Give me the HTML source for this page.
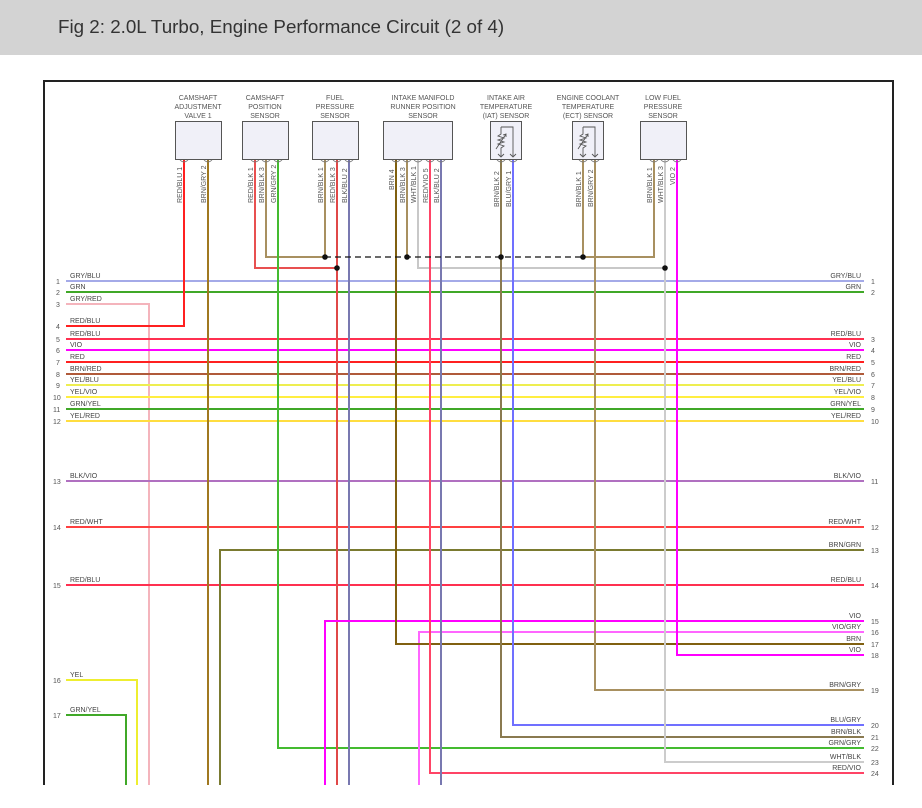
<!DOCTYPE html>
<html><head><meta charset="utf-8"><style>
html,body{margin:0;padding:0;background:#fff;}
body{width:922px;height:808px;overflow:hidden;position:relative;font-family:"Liberation Sans",sans-serif;}
.hdr{position:absolute;left:0;top:0;width:922px;height:55px;background:#d3d3d3;}
.hdr span{position:absolute;left:58px;top:16px;font-size:18.8px;color:#333;}
svg{position:absolute;left:0;top:0;}
svg text{font-family:"Liberation Sans",sans-serif;fill:#444;}
.t{font-size:7px;text-anchor:middle;fill:#555;}
.p{font-size:7px;fill:#555;}
.l{font-size:7px;fill:#444;}
.r{font-size:7px;fill:#444;text-anchor:end;}
.n{font-size:7px;fill:#555;}
</style></head><body>
<div class="hdr"><span>Fig 2: 2.0L Turbo, Engine Performance Circuit (2 of 4)</span></div>
<svg width="922" height="808" viewBox="0 0 922 808">
<path d="M44,785 V81 H893 V785" fill="none" stroke="#222" stroke-width="2"/>
<g class="t">
<text x="198" y="100" class="t">CAMSHAFT</text><text x="198" y="109" class="t">ADJUSTMENT</text><text x="198" y="118" class="t">VALVE 1</text>
<text x="265" y="100" class="t">CAMSHAFT</text><text x="265" y="109" class="t">POSITION</text><text x="265" y="118" class="t">SENSOR</text>
<text x="335" y="100" class="t">FUEL</text><text x="335" y="109" class="t">PRESSURE</text><text x="335" y="118" class="t">SENSOR</text>
<text x="423" y="100" class="t">INTAKE MANIFOLD</text><text x="423" y="109" class="t">RUNNER POSITION</text><text x="423" y="118" class="t">SENSOR</text>
<text x="506" y="100" class="t">INTAKE AIR</text><text x="506" y="109" class="t">TEMPERATURE</text><text x="506" y="118" class="t">(IAT) SENSOR</text>
<text x="588" y="100" class="t">ENGINE COOLANT</text><text x="588" y="109" class="t">TEMPERATURE</text><text x="588" y="118" class="t">(ECT) SENSOR</text>
<text x="663" y="100" class="t">LOW FUEL</text><text x="663" y="109" class="t">PRESSURE</text><text x="663" y="118" class="t">SENSOR</text>
</g>
<g fill="#f0f0f8" stroke="#555" stroke-width="1">
<rect x="175.5" y="121.5" width="46" height="38"/>
<rect x="242.5" y="121.5" width="46" height="38"/>
<rect x="312.5" y="121.5" width="46" height="38"/>
<rect x="383.5" y="121.5" width="69" height="38"/>
<rect x="490.5" y="121.5" width="31" height="38"/>
<rect x="572.5" y="121.5" width="31" height="38"/>
<rect x="640.5" y="121.5" width="46" height="38"/>
</g>
<g fill="none" stroke="#555" stroke-width="0.9">
<path d="M501,127 H513 V157 M501,127 V134 l-3,2 l6,2 l-6,2 l6,2 l-6,2 l6,2 l-3,2 V157 M498,154 L501,157 L504,154 M510,154 L513,157 L516,154 M496,149 L506,134 M503,135 L506,134 L506,137"/>
<path d="M583,127 H595 V157 M583,127 V134 l-3,2 l6,2 l-6,2 l6,2 l-6,2 l6,2 l-3,2 V157 M580,154 L583,157 L586,154 M592,154 L595,157 L598,154 M578,149 L588,134 M585,135 L588,134 L588,137"/>
</g>
<g stroke-width="2" fill="none">
<path d="M66,281 H864" stroke="#a4aae8"/>
<path d="M66,292 H864" stroke="#40a828"/>
<path d="M66,304 H149 V785" stroke="#f4b4bc"/>
<path d="M66,326 H184 V160" stroke="#ff2020"/>
<path d="M66,339 H864" stroke="#ff3050"/>
<path d="M66,350 H864" stroke="#ff00ff"/>
<path d="M66,362 H864" stroke="#ff2020"/>
<path d="M66,374 H864" stroke="#b05a3a"/>
<path d="M66,385 H864" stroke="#eeee50"/>
<path d="M66,397 H864" stroke="#ffee40"/>
<path d="M66,409 H864" stroke="#40a828"/>
<path d="M66,421 H864" stroke="#ffdd40"/>
<path d="M66,481 H864" stroke="#b070c0"/>
<path d="M66,527 H864" stroke="#ff4040"/>
<path d="M66,585 H864" stroke="#ff3050"/>
<path d="M66,680 H137 V785" stroke="#eeee30"/>
<path d="M66,715 H126 V785" stroke="#40a828"/>
<path d="M220,785 V550 H864" stroke="#7a7a30"/>
<path d="M208,160 V785" stroke="#a07820"/>
<path d="M255,160 V268 H337" stroke="#e85050"/>
<path d="M266,160 V257 H325 V160" stroke="#a89060"/>
<path d="M278,160 V748 H864" stroke="#44bb30"/>
<path d="M337,160 V785" stroke="#e04848"/>
<path d="M349,160 V785" stroke="#7878b0"/>
<path d="M325,785 V621 H864" stroke="#ff00ff"/>
<path d="M419,785 V632 H864" stroke="#ff66ff"/>
<path d="M396,160 V644 H864" stroke="#806010"/>
<path d="M407,160 V257" stroke="#a89060"/>
<path d="M418,160 V268 H665" stroke="#c8c8c8"/>
<path d="M430,160 V773 H864" stroke="#ff4466"/>
<path d="M441,160 V785" stroke="#7878b0"/>
<path d="M501,160 V737 H864" stroke="#8a7a50"/>
<path d="M513,160 V725 H864" stroke="#7070ff"/>
<path d="M583,160 V257 H654 V160" stroke="#a89060"/>
<path d="M595,160 V690 H864" stroke="#a89060"/>
<path d="M665,160 V762 H864" stroke="#cccccc"/>
<path d="M677,160 V655 H864" stroke="#ff00ff"/>
</g>
<path d="M325,257 H583" stroke="#111" stroke-width="1.3" stroke-dasharray="6,4" fill="none"/>
<g fill="#111">
<circle cx="325" cy="257" r="2.8"/><circle cx="407" cy="257" r="2.8"/><circle cx="501" cy="257" r="2.8"/><circle cx="583" cy="257" r="2.8"/>
<circle cx="337" cy="268" r="2.8"/><circle cx="665" cy="268" r="2.8"/>
</g>
<g fill="none" stroke="#777" stroke-width="0.8">
<path d="M180,160 q4,4 8,0 M204,160 q4,4 8,0 M251,160 q4,4 8,0 M262,160 q4,4 8,0 M274,160 q4,4 8,0 M321,160 q4,4 8,0 M333,160 q4,4 8,0 M345,160 q4,4 8,0 M392,160 q4,4 8,0 M403,160 q4,4 8,0 M414,160 q4,4 8,0 M426,160 q4,4 8,0 M437,160 q4,4 8,0 M497,160 q4,4 8,0 M509,160 q4,4 8,0 M579,160 q4,4 8,0 M591,160 q4,4 8,0 M650,160 q4,4 8,0 M661,160 q4,4 8,0 M673,160 q4,4 8,0"/>
</g>
<g class="p">
<text transform="translate(182,203) rotate(-90)" class="p">RED/BLU  1</text>
<text transform="translate(206,203) rotate(-90)" class="p">BRN/GRY  2</text>
<text transform="translate(253,203) rotate(-90)" class="p">RED/BLK  1</text>
<text transform="translate(264,203) rotate(-90)" class="p">BRN/BLK  3</text>
<text transform="translate(276,203) rotate(-90)" class="p">GRN/GRY  2</text>
<text transform="translate(323,203) rotate(-90)" class="p">BRN/BLK  1</text>
<text transform="translate(335,203) rotate(-90)" class="p">RED/BLK  3</text>
<text transform="translate(347,203) rotate(-90)" class="p">BLK/BLU  2</text>
<text transform="translate(394,190) rotate(-90)" class="p">BRN  4</text>
<text transform="translate(405,203) rotate(-90)" class="p">BRN/BLK  3</text>
<text transform="translate(416,203) rotate(-90)" class="p">WHT/BLK  1</text>
<text transform="translate(428,203) rotate(-90)" class="p">RED/VIO  5</text>
<text transform="translate(439,203) rotate(-90)" class="p">BLK/BLU  2</text>
<text transform="translate(499,207) rotate(-90)" class="p">BRN/BLK  2</text>
<text transform="translate(511,207) rotate(-90)" class="p">BLU/GRY  1</text>
<text transform="translate(581,207) rotate(-90)" class="p">BRN/BLK  1</text>
<text transform="translate(593,207) rotate(-90)" class="p">BRN/GRY  2</text>
<text transform="translate(652,203) rotate(-90)" class="p">BRN/BLK  1</text>
<text transform="translate(663,203) rotate(-90)" class="p">WHT/BLK  3</text>
<text transform="translate(675,185) rotate(-90)" class="p">VIO  2</text>
</g>
<g>
<text x="70" y="278" class="l">GRY/BLU</text><text x="56" y="284" class="n">1</text>
<text x="70" y="289" class="l">GRN</text><text x="56" y="295" class="n">2</text>
<text x="70" y="301" class="l">GRY/RED</text><text x="56" y="307" class="n">3</text>
<text x="70" y="323" class="l">RED/BLU</text><text x="56" y="329" class="n">4</text>
<text x="70" y="336" class="l">RED/BLU</text><text x="56" y="342" class="n">5</text>
<text x="70" y="347" class="l">VIO</text><text x="56" y="353" class="n">6</text>
<text x="70" y="359" class="l">RED</text><text x="56" y="365" class="n">7</text>
<text x="70" y="371" class="l">BRN/RED</text><text x="56" y="377" class="n">8</text>
<text x="70" y="382" class="l">YEL/BLU</text><text x="56" y="388" class="n">9</text>
<text x="70" y="394" class="l">YEL/VIO</text><text x="53" y="400" class="n">10</text>
<text x="70" y="406" class="l">GRN/YEL</text><text x="53" y="412" class="n">11</text>
<text x="70" y="418" class="l">YEL/RED</text><text x="53" y="424" class="n">12</text>
<text x="70" y="478" class="l">BLK/VIO</text><text x="53" y="484" class="n">13</text>
<text x="70" y="524" class="l">RED/WHT</text><text x="53" y="530" class="n">14</text>
<text x="70" y="582" class="l">RED/BLU</text><text x="53" y="588" class="n">15</text>
<text x="70" y="677" class="l">YEL</text><text x="53" y="683" class="n">16</text>
<text x="70" y="712" class="l">GRN/YEL</text><text x="53" y="718" class="n">17</text>
</g>
<g>
<text x="861" y="278" class="r">GRY/BLU</text><text x="871" y="284" class="n">1</text>
<text x="861" y="289" class="r">GRN</text><text x="871" y="295" class="n">2</text>
<text x="861" y="336" class="r">RED/BLU</text><text x="871" y="342" class="n">3</text>
<text x="861" y="347" class="r">VIO</text><text x="871" y="353" class="n">4</text>
<text x="861" y="359" class="r">RED</text><text x="871" y="365" class="n">5</text>
<text x="861" y="371" class="r">BRN/RED</text><text x="871" y="377" class="n">6</text>
<text x="861" y="382" class="r">YEL/BLU</text><text x="871" y="388" class="n">7</text>
<text x="861" y="394" class="r">YEL/VIO</text><text x="871" y="400" class="n">8</text>
<text x="861" y="406" class="r">GRN/YEL</text><text x="871" y="412" class="n">9</text>
<text x="861" y="418" class="r">YEL/RED</text><text x="871" y="424" class="n">10</text>
<text x="861" y="478" class="r">BLK/VIO</text><text x="871" y="484" class="n">11</text>
<text x="861" y="524" class="r">RED/WHT</text><text x="871" y="530" class="n">12</text>
<text x="861" y="547" class="r">BRN/GRN</text><text x="871" y="553" class="n">13</text>
<text x="861" y="582" class="r">RED/BLU</text><text x="871" y="588" class="n">14</text>
<text x="861" y="618" class="r">VIO</text><text x="871" y="624" class="n">15</text>
<text x="861" y="629" class="r">VIO/GRY</text><text x="871" y="635" class="n">16</text>
<text x="861" y="641" class="r">BRN</text><text x="871" y="647" class="n">17</text>
<text x="861" y="652" class="r">VIO</text><text x="871" y="658" class="n">18</text>
<text x="861" y="687" class="r">BRN/GRY</text><text x="871" y="693" class="n">19</text>
<text x="861" y="722" class="r">BLU/GRY</text><text x="871" y="728" class="n">20</text>
<text x="861" y="734" class="r">BRN/BLK</text><text x="871" y="740" class="n">21</text>
<text x="861" y="745" class="r">GRN/GRY</text><text x="871" y="751" class="n">22</text>
<text x="861" y="759" class="r">WHT/BLK</text><text x="871" y="765" class="n">23</text>
<text x="861" y="770" class="r">RED/VIO</text><text x="871" y="776" class="n">24</text>
</g>
</svg>
</body></html>
